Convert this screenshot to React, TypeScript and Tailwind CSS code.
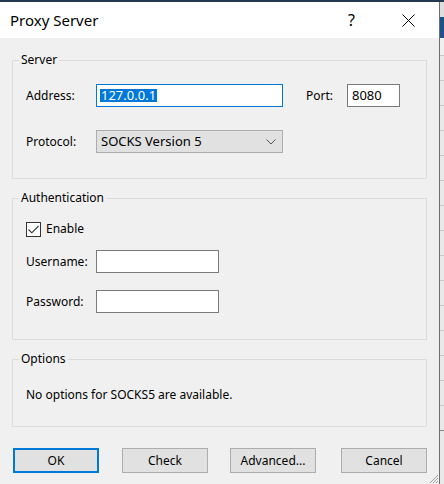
import React from 'react';

const font = { fontFamily: '"Noto Sans", "Open Sans", sans-serif' };

function GroupBox({ title, className, children }: { title: string; className?: string; children: React.ReactNode }) {
  return (
    <fieldset className={`w-[415px] border border-[#dcdcdc] px-0 ${className ?? ''}`}>
      <legend className="ml-[6px] px-[2px] text-[12px] leading-[16px] text-black">{title}</legend>
      {children}
    </fieldset>
  );
}

function Button({ label, primary, className }: { label: string; primary?: boolean; className?: string }) {
  return (
    <button
      className={`w-[86px] h-[25px] bg-[#e1e1e1] text-[12px] text-black flex items-center justify-center ${
        primary ? 'border-2 border-[#0078d7]' : 'border border-[#adadad]'
      } ${className ?? ''}`}
    >
      {label}
    </button>
  );
}

export default function App() {
  return (
    <div className="w-[444px] h-[484px] overflow-hidden flex flex-col bg-[#f0f0f0]" style={font}>
      {/* desktop strip above the dialog */}
      <div className="h-[2px] bg-[#23384c] shrink-0" />

      <div className="flex flex-1">
        {/* Dialog */}
        <div className="w-[439px] flex flex-col bg-[#f0f0f0] relative">
          {/* Title bar */}
          <div className="h-[36px] bg-white flex items-center shrink-0">
            <span className="ml-[10px] text-[15px] text-black">Proxy Server</span>
            <span className="ml-auto mr-[47px] text-[16px] text-black">?</span>
            <svg className="mr-[24px]" width="13" height="13" viewBox="0 0 13 13">
              <path d="M0.5 0.5 L12.5 12.5 M12.5 0.5 L0.5 12.5" stroke="#000" strokeWidth="1" />
            </svg>
          </div>

          <div className="pl-[12px] pt-[14px] flex flex-col text-[12px] text-black">
            {/* Server */}
            <GroupBox title="Server">
              <div className="pl-[13px] pt-[16px] pb-[25px]">
                <div className="flex items-center h-[23px]">
                  <span className="w-[70px]">Address:</span>
                  <div className="w-[187px] h-[23px] bg-white border border-[#0078d7] flex items-center pl-[3px]">
                    <span className="bg-[#0078d7] text-white text-[13px] leading-[13px] px-px">127.0.0.1</span>
                  </div>
                  <span className="w-[41px] ml-[23px]">Port:</span>
                  <div className="w-[53px] h-[23px] bg-white border border-[#7a7a7a] flex items-center pl-[4px] text-[13px]">
                    8080
                  </div>
                </div>
                <div className="flex items-center h-[23px] mt-[23px]">
                  <span className="w-[70px]">Protocol:</span>
                  <div className="w-[187px] h-[23px] bg-[#e1e1e1] border border-[#adadad] flex items-center pl-[4px] pr-[6px] text-[13px]">
                    <span>SOCKS Version 5</span>
                    <svg className="ml-auto" width="10" height="6" viewBox="0 0 10 6">
                      <path d="M0.5 0.5 L5 5 L9.5 0.5" fill="none" stroke="#555" strokeWidth="1" />
                    </svg>
                  </div>
                </div>
              </div>
            </GroupBox>

            {/* Authentication */}
            <GroupBox title="Authentication" className="mt-[11px]">
              <div className="pl-[13px] pt-[15px] pb-[26px]">
                <div className="flex items-center h-[16px]">
                  <div className="w-[15px] h-[15px] border border-[#333] bg-white flex items-center justify-center">
                    <svg width="11" height="9" viewBox="0 0 11 9">
                      <path d="M0.5 4.5 L3.8 7.8 L10.5 1" fill="none" stroke="#333" strokeWidth="1.1" />
                    </svg>
                  </div>
                  <span className="ml-[5px]">Enable</span>
                </div>
                <div className="flex items-center h-[23px] mt-[13px]">
                  <span className="w-[70px]">Username:</span>
                  <div className="w-[123px] h-[23px] bg-white border border-[#7a7a7a]" />
                </div>
                <div className="flex items-center h-[23px] mt-[17px]">
                  <span className="w-[70px]">Password:</span>
                  <div className="w-[123px] h-[23px] bg-white border border-[#7a7a7a]" />
                </div>
              </div>
            </GroupBox>

            {/* Options */}
            <GroupBox title="Options" className="mt-[11px]">
              <div className="pl-[13px] pt-[20px] pb-[23px] leading-[16px]">No options for SOCKS5 are available.</div>
            </GroupBox>

            {/* Buttons */}
            <div className="flex mt-[21px] pl-[1px]">
              <Button label="OK" primary />
              <Button label="Check" className="ml-[23px]" />
              <Button label="Advanced..." className="ml-[22px]" />
              <Button label="Cancel" className="ml-[25px]" />
            </div>
          </div>

          {/* resize grip */}
          <svg className="absolute right-0 bottom-0" width="11" height="11" viewBox="0 0 11 11">
            <path d="M10 2 L2 10 M10 5 L5 10 M10 8 L8 10" stroke="#a0a0a0" strokeWidth="1" />
          </svg>
        </div>

        <div className="w-[1px] bg-[#6e6e6e]" />

        {/* window behind */}
        <div className="flex-1 flex flex-col bg-[#e9e9e9]">
          <div className="h-[15px] bg-[#dedede]" />
          <div className="h-[21px] bg-[#1d5288]" />
          <div className="h-[18px] bg-[#f0f0f0] border-b border-[#c8c8c8]" />
          <div className="h-[25px] border-b border-[#c8c8c8]" />
          <div className="h-[25px] border-b border-[#c8c8c8]" />
          <div className="h-[25px] border-b border-[#c8c8c8]" />
          <div className="h-[25px] border-b border-[#c8c8c8]" />
          <div className="h-[25px] border-b border-[#c8c8c8]" />
          <div className="h-[25px] border-b border-[#c8c8c8]" />
          <div className="h-[25px] border-b border-[#c8c8c8]" />
          <div className="h-[25px] border-b border-[#c8c8c8]" />
          <div className="h-[25px] border-b border-[#c8c8c8]" />
          <div className="h-[25px] border-b border-[#c8c8c8]" />
          <div className="h-[25px] border-b border-[#c8c8c8]" />
          <div className="h-[25px] border-b border-[#c8c8c8]" />
          <div className="h-[25px] border-b border-[#c8c8c8]" />
          <div className="h-[25px] border-b border-[#c8c8c8]" />
          <div className="h-[25px] border-b border-[#888]" />
        </div>
      </div>
    </div>
  );
}
